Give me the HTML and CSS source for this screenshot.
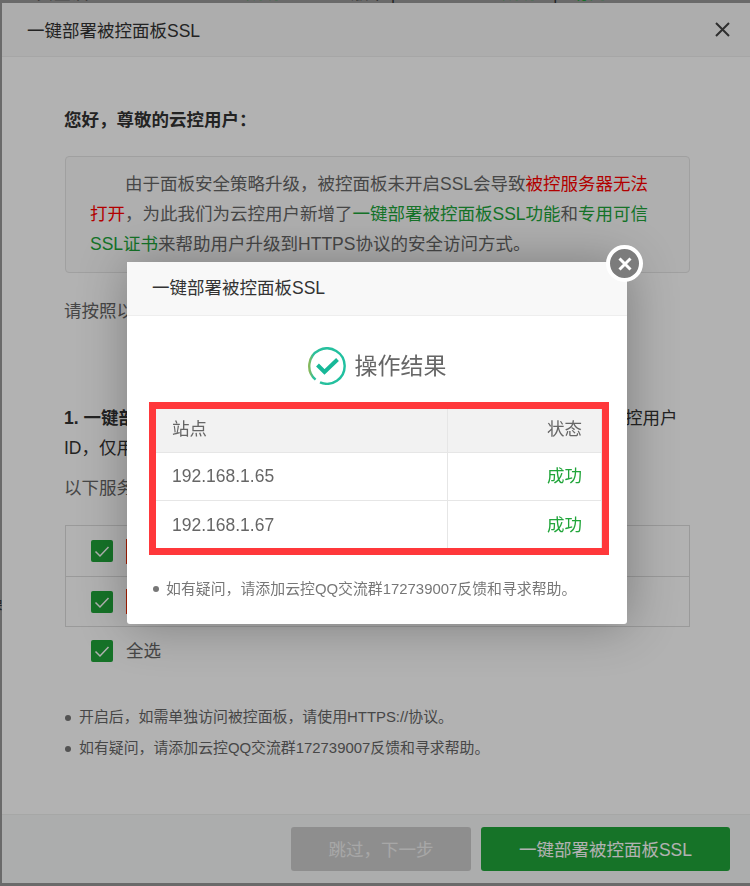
FILE: index.html
```html
<!DOCTYPE html>
<html lang="en">

<head>
    <meta charset="UTF-8">
    <meta name="viewport" content="width=device-width, initial-scale=1">
    <title>一键部署被控面板SSL</title>
    <link rel="stylesheet" href="styles.css">
</head>

<body>
<!-- page behind the dialog, only its last row peeks out -->
<div class="behind-row">
    <span class="behind-a">安全设置</span>
    <span class="behind-b green">成功</span>
    <span class="behind-c">版本 | 7</span>
    <span class="behind-d green">成功</span>
    <span class="behind-e">|</span>
    <span class="behind-f green">访问</span>
</div>
<div class="main">
    <div class="gutter"><span>操</span></div>
    <!-- wizard dialog -->
    <div class="dialog">
        <div class="dialog-title">
            一键部署被控面板SSL
            <svg class="dialog-close" width="15" height="15" viewBox="0 0 15 15">
                <path d="M1 1L14 14M14 1L1 14" />
            </svg>
        </div>
        <div class="dialog-content">
            <p class="greeting">您好，尊敬的云控用户：</p>
            <div class="notice">
                由于面板安全策略升级，被控面板未开启SSL会导致<span class="red">被控服务器无法打开</span>，为此我们为云控用户新增了<span class="green">一键部署被控面板SSL功能</span>和<span class="green">专用可信SSL证书</span>来帮助用户升级到HTTPS协议的安全访问方式。
            </div>
            <p class="follow">请按照以下步骤完成被控面板的安全升级操作：</p>
            <p class="step"><b>1. 一键部署被控面板SSL：</b>面板会生成专用证书并自动部署，证书绑定云控用户ID，仅用于云控与被控面板之间的通信。</p>
            <p class="server-tip">以下服务器未开启SSL，请选择需要部署的服务器：</p>
            <div class="server-list">
                <div class="server-row">
                    <span class="check"><svg width="22" height="22" viewBox="0 0 22 22"><path d="M4.5 11.5L9 16L17.5 7" /></svg></span>
                    <span class="tag">未开启SSL</span>
                </div>
                <div class="server-row">
                    <span class="check"><svg width="22" height="22" viewBox="0 0 22 22"><path d="M4.5 11.5L9 16L17.5 7" /></svg></span>
                    <span class="tag">未开启SSL</span>
                </div>
            </div>
            <div class="select-all">
                <span class="check"><svg width="22" height="22" viewBox="0 0 22 22"><path d="M4.5 11.5L9 16L17.5 7" /></svg></span>
                全选
            </div>
            <ul class="notes">
                <li>开启后，如需单独访问被控面板，请使用HTTPS://协议。</li>
                <li>如有疑问，请添加云控QQ交流群172739007反馈和寻求帮助。</li>
            </ul>
        </div>
        <div class="dialog-footer">
            <button class="btn btn-skip">跳过，下一步</button>
            <button class="btn btn-deploy">一键部署被控面板SSL</button>
        </div>
    </div>
</div>
<!-- mask -->
<div class="ui-mask"></div>
<!-- result popup -->
<div class="popup">
    <div class="popup-close">
        <svg width="16" height="16" viewBox="0 0 16 16"><path d="M2.5 2.5L13.5 13.5M13.5 2.5L2.5 13.5" /></svg>
    </div>
    <div class="popup-title">一键部署被控面板SSL</div>
    <div class="result-head">
        <svg class="result-icon" width="38" height="38" viewBox="0 0 38 38">
            <defs>
                <linearGradient id="ring" x1="0" y1="0" x2="1" y2="0">
                    <stop offset="0" stop-color="#86b85a" />
                    <stop offset="0.12" stop-color="#2cc09c" />
                    <stop offset="1" stop-color="#1fc0a0" />
                </linearGradient>
            </defs>
            <path class="ring" d="M7.6 32.6A17.7 17.7 0 1 1 12 35.3" stroke="url(#ring)" />
            <path class="tick" d="M9.5 18L16.5 25L29.5 12.5" />
        </svg>
        <span class="result-text">操作结果</span>
    </div>
    <div class="result-frame">
        <table class="result-table">
            <tr>
                <th>站点</th>
                <th class="right">状态</th>
            </tr>
            <tr>
                <td>192.168.1.65</td>
                <td class="right green">成功</td>
            </tr>
            <tr>
                <td>192.168.1.67</td>
                <td class="right green">成功</td>
            </tr>
        </table>
    </div>
    <ul class="popup-notes">
        <li>如有疑问，请添加云控QQ交流群172739007反馈和寻求帮助。</li>
    </ul>
</div>
</body>

</html>
```

FILE: styles.css
```css
* {
    box-sizing: border-box;
}

body {
    margin: 0;
    height: 886px;
    overflow: hidden;
    background-color: #999;
    color: #666;
    font-family: "Liberation Sans", "Noto Sans CJK SC", sans-serif;
    font-size: 17.5px;
}

.green {
    color: #20a53a;
}

.red {
    color: #f00;
}

/* page behind */
.behind-row {
    display: flex;
    height: 3px;
    overflow: hidden;
    line-height: 3px;
    font-size: 17.5px;
    color: #333;
}

.behind-row span {
    margin-top: -8px;
    white-space: nowrap;
}

.behind-a {
    margin-left: 36px;
}

.behind-b {
    margin-left: 140px;
}

.behind-c {
    margin-left: 70px;
}

.behind-d {
    margin-left: 92px;
}

.behind-e {
    margin-left: 16px;
}

.behind-f {
    margin-left: 14px;
}

.main {
    display: flex;
    height: 880px;
}

.gutter {
    width: 2px;
    padding-top: 590px;
    overflow: hidden;
    color: #333;
    line-height: 20px;
}

.gutter span {
    display: block;
    width: 20px;
    margin-left: -15px;
}

/* dialog */
.dialog {
    display: flex;
    flex-direction: column;
    width: 748px;
    background-color: #fff;
}

.dialog-title {
    display: flex;
    align-items: center;
    justify-content: space-between;
    flex: none;
    height: 54px;
    padding: 0 20px 0 25px;
    background-color: #f8f8f8;
    border-bottom: 1px solid #eee;
    color: #333;
}

.dialog-close path {
    fill: none;
    stroke: #444;
    stroke-width: 2;
}

.dialog-content {
    flex: 1;
    padding: 48px 60px 0 62px;
    line-height: 30px;
}

.dialog-content p {
    margin: 0;
}

.greeting {
    color: #333;
    font-weight: bold;
}

.notice {
    height: 117px;
    margin: 21px 0 0 1px;
    padding: 12px 24px;
    border: 1px solid #e6e6e6;
    border-radius: 4px;
    background-color: #fbfbfb;
    text-indent: 2em;
}

.dialog-content .follow {
    margin-top: 23px;
}

.dialog-content .step {
    margin-top: 77px;
    color: #333;
}

.dialog-content .server-tip {
    margin-top: 10px;
}

.server-list {
    margin: 22px 0 0 1px;
    border: 1px solid #ddd;
    border-bottom: 0;
}

.server-row {
    display: flex;
    align-items: center;
    gap: 13px;
    height: 51px;
    padding-left: 25px;
    border-bottom: 1px solid #ddd;
}

.server-row + .server-row {
    height: 50px;
}

.check {
    display: block;
    flex: none;
    width: 22px;
    height: 22px;
    border-radius: 2px;
    background-color: #20a53a;
}

.check svg {
    display: block;
}

.check path {
    fill: none;
    stroke: #fff;
    stroke-width: 1.5;
}

.tag {
    height: 25px;
    padding: 0 8px;
    background-color: #f32b00;
    color: #fff;
    line-height: 25px;
}

.select-all {
    display: flex;
    align-items: center;
    gap: 13px;
    height: 48px;
    padding-left: 27px;
}

.notes,
.popup-notes {
    margin: 0;
    padding: 0;
    list-style: none;
    font-size: 14.9px;
}

.notes {
    margin-top: 27px;
    line-height: 31px;
}

.notes li,
.popup-notes li {
    display: flex;
    align-items: center;
    gap: 8px;
}

.notes li::before,
.popup-notes li::before {
    content: "";
    flex: none;
    width: 6px;
    height: 6px;
    margin-left: 1px;
    border-radius: 50%;
    background-color: #777;
}

.dialog-footer {
    display: flex;
    justify-content: flex-end;
    gap: 10px;
    flex: none;
    padding: 12px 20px 12px 0;
    background-color: #f6f8f8;
    border-top: 1px solid #eef0ee;
}

.btn {
    height: 44px;
    padding: 0 0 2px;
    border: 0;
    border-radius: 3px;
    color: #fff;
    font-family: inherit;
    font-size: 17.5px;
}

.btn-skip {
    width: 180px;
    background-color: #ccc;
    color: #f0f0f0;
}

.btn-deploy {
    width: 249px;
    background-color: #20a53a;
}

.ui-mask {
    position: fixed;
    top: 0;
    right: 0;
    bottom: 0;
    left: 0;
    background-color: #000;
    opacity: 0.3;
}

/* result popup */
.popup {
    position: absolute;
    top: 262px;
    left: 127px;
    width: 500px;
    height: 362px;
    border-radius: 3px;
    background-color: #fff;
    box-shadow: 1px 1px 50px rgba(0, 0, 0, 0.3);
}

.popup-close {
    position: absolute;
    top: -17px;
    left: 479px;
    display: flex;
    align-items: center;
    justify-content: center;
    width: 37px;
    height: 37px;
    border: 4px solid #fff;
    border-radius: 50%;
    background-color: #7c7c7c;
}

.popup-close path {
    fill: none;
    stroke: #fff;
    stroke-width: 3;
}

.popup-title {
    height: 54px;
    padding-left: 25px;
    background-color: #f8f8f8;
    border-bottom: 1px solid #eee;
    color: #333;
    line-height: 52px;
}

.result-head {
    display: flex;
    align-items: center;
    justify-content: center;
    gap: 9px;
    height: 38px;
    margin-top: 31px;
    font-size: 23px;
}

.result-text {
    padding-bottom: 4px;
}

.ring {
    fill: none;
    stroke-width: 2.4;
}

.tick {
    fill: none;
    stroke: #17b898;
    stroke-width: 4;
}

.result-frame {
    margin: 17px 18px 0 22px;
    border: 7px solid #ff383b;
}

.result-table {
    width: 446px;
    border-collapse: separate;
    border-spacing: 0;
    table-layout: fixed;
}

.result-table th,
.result-table td {
    padding: 0 19px 0 16px;
    border-right: 1px solid #e6e6e6;
    border-bottom: 1px solid #e6e6e6;
    font-weight: normal;
    text-align: left;
}

.result-table th:first-child,
.result-table td:first-child {
    width: 292px;
}

.result-table td {
    height: 48px;
}

.result-table tr:last-child td {
    height: 47px;
    border-bottom: 0;
}

.result-table tr:last-child td:first-child {
    padding-top: 2px;
}

.result-table .right {
    padding-bottom: 4px;
    text-align: right;
}

.result-table tr:last-child .right {
    padding-bottom: 2px;
}

.result-table th,
.result-table th.right {
    height: 44px;
    padding-bottom: 7px;
    background-color: #f2f2f2;
}

.popup-notes {
    margin-top: 24px;
    padding-left: 25px;
    color: #777;
    line-height: 20px;
}

.popup-notes li {
    gap: 7px;
}
```
